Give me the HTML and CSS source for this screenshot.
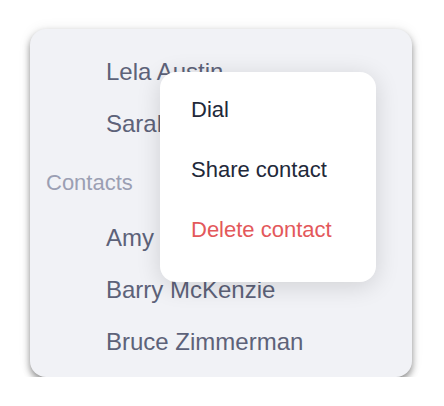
FILE: index.html
```html
<!DOCTYPE html>
<html>
<head>
<meta charset="utf-8">
<link rel="stylesheet" href="styles.css">
</head>
<body>
<div class="stage">
  <div class="card">
    <div class="row">Lela Austin</div>
    <div class="row">Sarah Kim</div>
    <div class="header">Contacts</div>
    <div class="row">Amy Chen</div>
    <div class="row">Barry McKenzie</div>
    <div class="row">Bruce Zimmerman</div>
    <div class="menu">
      <div class="item">Dial</div>
      <div class="item">Share contact</div>
      <div class="item danger">Delete contact</div>
    </div>
  </div>
</div>
</body>
</html>
```
FILE: styles.css
```css
html, body {
  margin: 0;
  padding: 0;
  background: #ffffff;
}
.stage {
  padding: 29px 32px 0 30px;
  font-family: "Liberation Sans", Arial, sans-serif;
}
.card {
  position: relative;
  width: 382px;
  box-sizing: border-box;
  padding: 17px 0 9px 0;
  background: #f1f2f6;
  border-radius: 16px;
  box-shadow: 0 4px 7px rgba(0, 0, 0, 0.42), 0 0 14px rgba(0, 0, 0, 0.07);
}
.row {
  height: 52px;
  line-height: 52px;
  font-size: 24px;
  color: #5d6279;
  padding-left: 76px;
  white-space: nowrap;
}
.header {
  height: 59px;
  line-height: 59px;
  padding-top: 3px;
  font-size: 22px;
  color: #9b9fb3;
  padding-left: 16px;
}
.menu {
  position: absolute;
  left: 130px;
  top: 43px;
  width: 216px;
  height: 210px;
  box-sizing: border-box;
  padding: 8px 0 22px 0;
  background: #ffffff;
  border-radius: 16px;
  box-shadow: 0 4px 24px rgba(0, 0, 0, 0.14);
}
.item {
  height: 60px;
  line-height: 60px;
  font-size: 22px;
  color: #222839;
  padding-left: 31px;
  white-space: nowrap;
}
.item.danger {
  color: #e3585b;
}
```
